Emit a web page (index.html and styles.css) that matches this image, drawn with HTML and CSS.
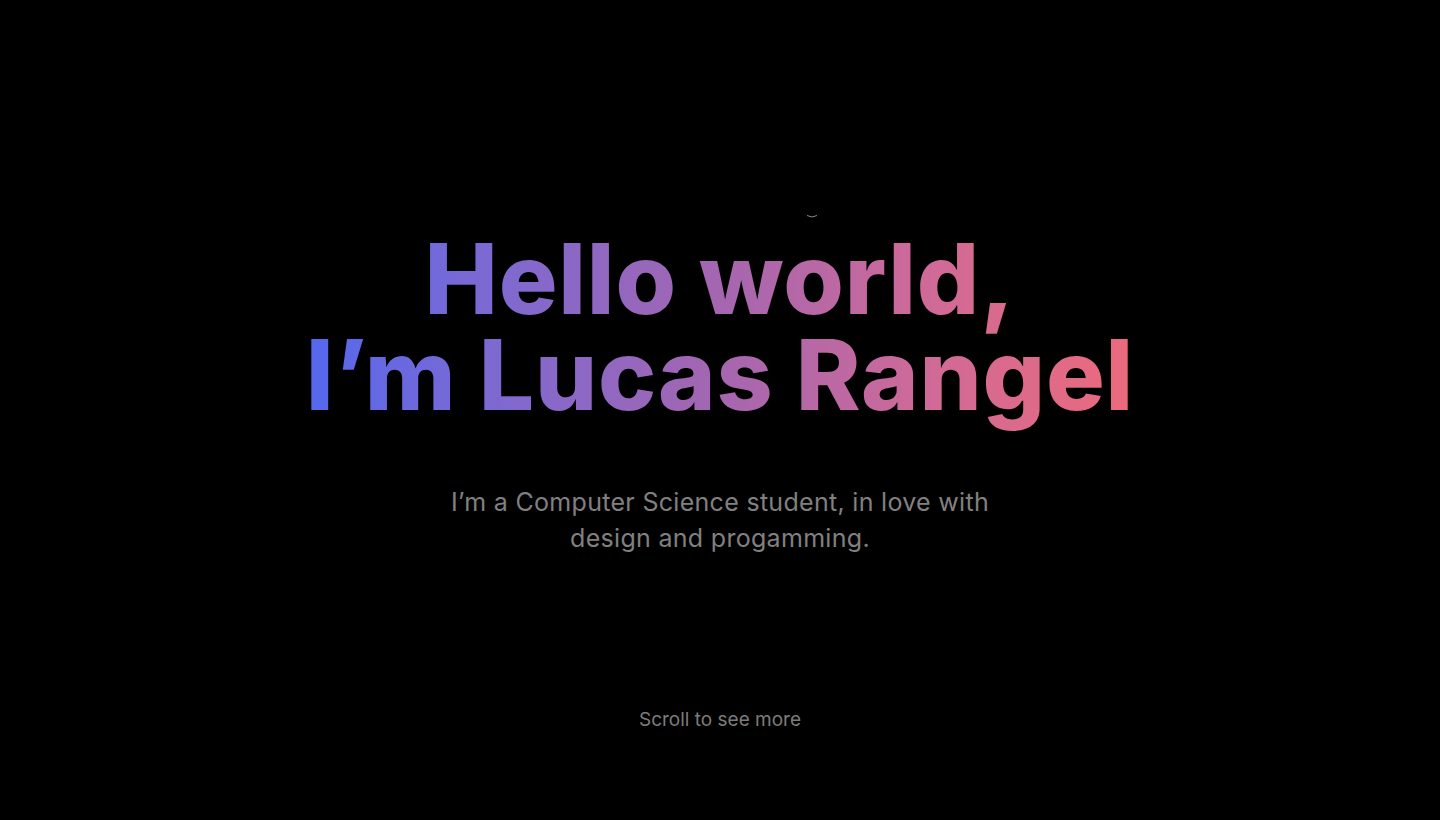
FILE: index.html
```html
<!DOCTYPE html>
<html lang="en">
<head>
<meta charset="utf-8">
<title>Lucas Rangel</title>
<link rel="stylesheet" href="styles.css">
</head>
<body>
<main class="hero">
  <div class="hero-content">
    <span class="wave" aria-hidden="true">
      <svg width="12" height="6" viewBox="0 0 12 6"><path d="M1 1.5 Q6 4.5 11 1.5" fill="none" stroke="#8a8a8a" stroke-width="1"/></svg>
    </span>
    <h1 class="title">Hello world,<br>I’m Lucas Rangel</h1>
    <p class="subtitle">I’m a Computer Science student, in love with design and progamming.</p>
  </div>
  <p class="scroll-hint">Scroll to see more</p>
</main>
</body>
</html>
```
FILE: styles.css
```css
* { box-sizing: border-box; }
html, body { margin: 0; padding: 0; background: #000; }
body { font-family: "Inter", "Noto Sans", sans-serif; color: #fff; }
.hero {
  height: 820px;
  display: flex;
  flex-direction: column;
  align-items: center;
  padding-top: 231px;
}
.hero-content {
  position: relative;
  display: flex;
  flex-direction: column;
  align-items: center;
}
.wave {
  position: absolute;
  top: -17px;
  left: 50%;
  margin-left: 86px;
  line-height: 0;
}
.title {
  margin: 0;
  padding-bottom: 24px;
  display: inline-block;
  text-align: center;
  font-size: 98px;
  font-weight: 800;
  line-height: 96px;
  letter-spacing: 0.8px;
  background: linear-gradient(90deg, #5468ee 0%, #7a69d4 20%, #a566b0 50%, #cf6a98 75%, #ec6a7c 100%);
  -webkit-background-clip: text;
  background-clip: text;
  color: transparent;
}
.subtitle {
  margin: 37px 0 0;
  width: 580px;
  text-align: center;
  font-size: 25px;
  line-height: 36px;
  letter-spacing: 0.3px;
  color: #808080;
}
.scroll-hint {
  margin: auto 0 88px;
  font-size: 19px;
  line-height: 24px;
  color: #7c7c7c;
}
```
